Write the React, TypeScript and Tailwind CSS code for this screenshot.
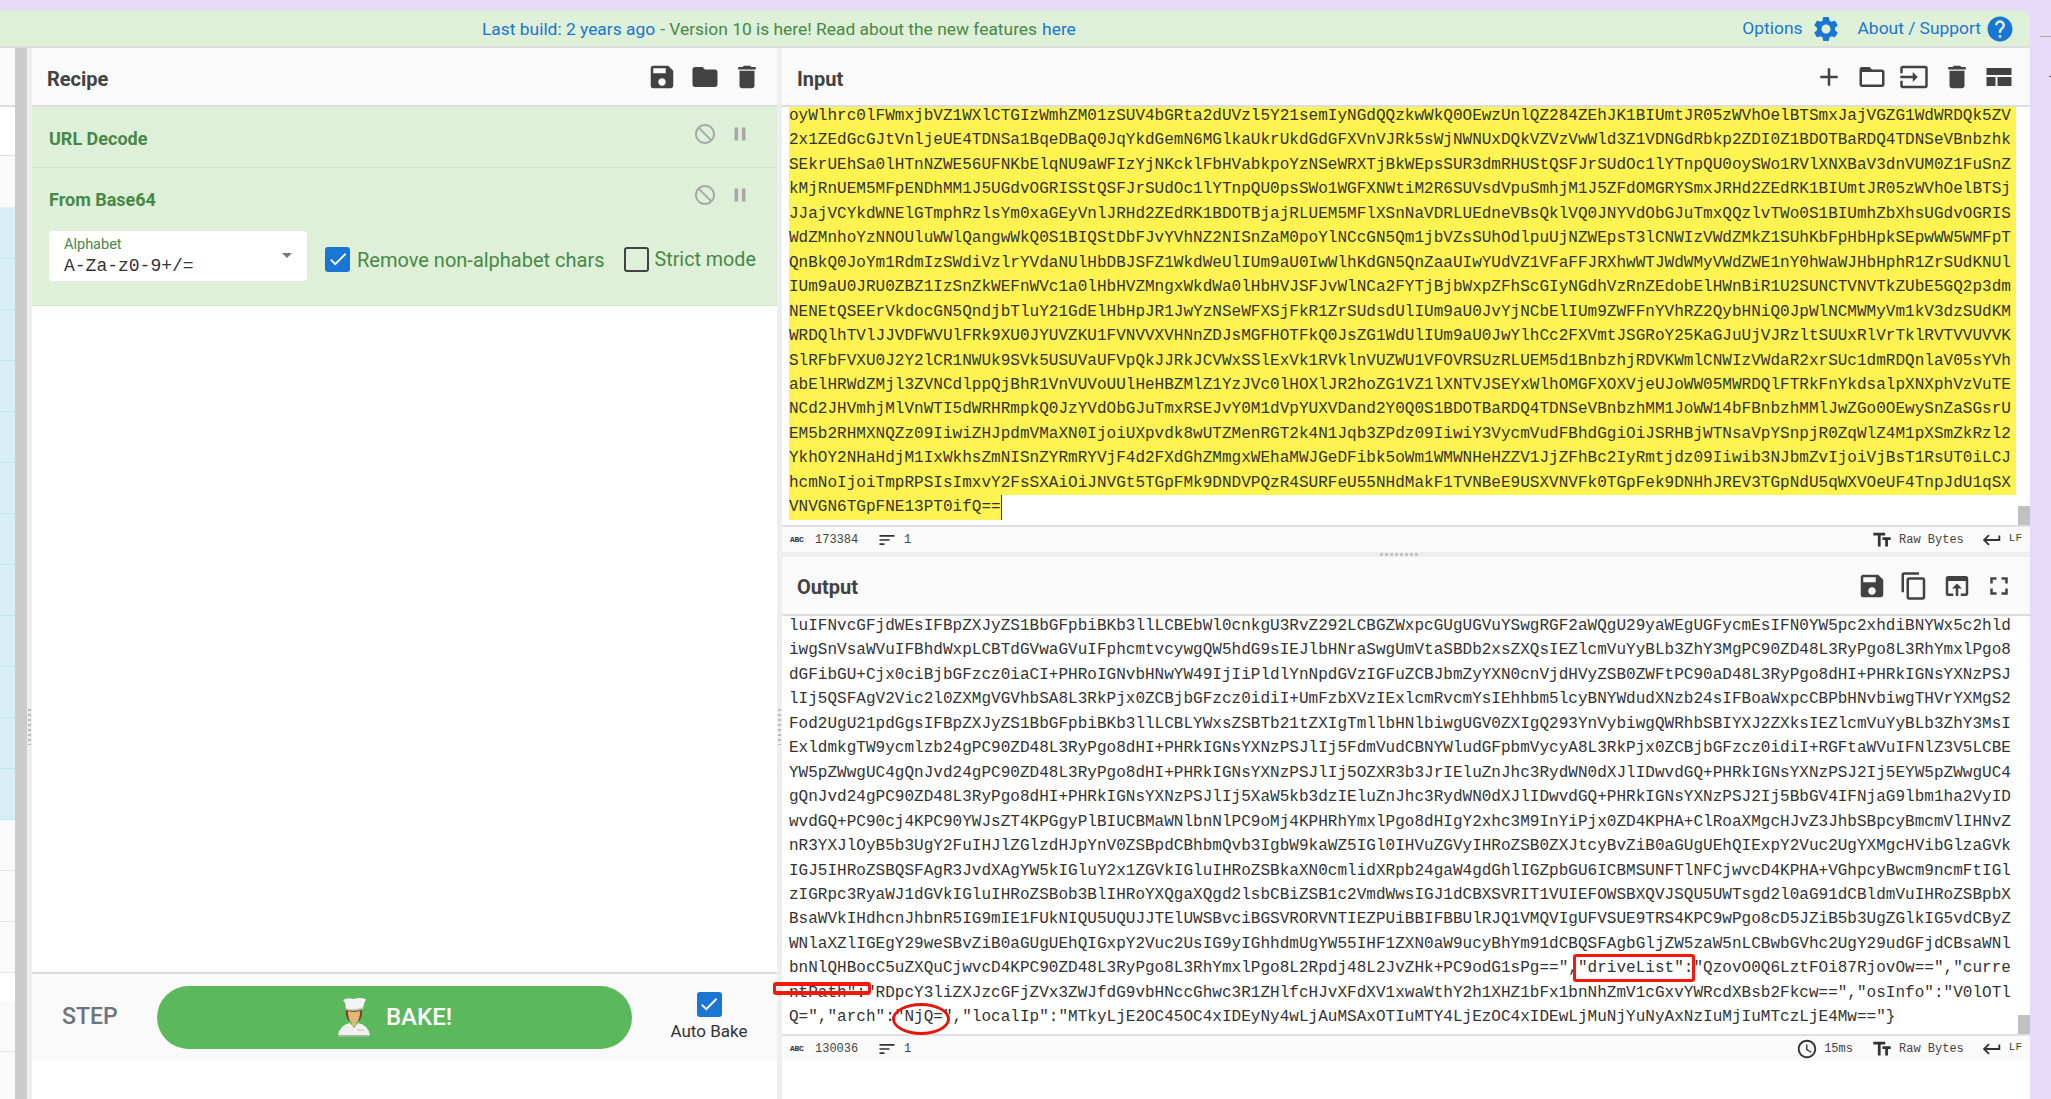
import React from "react";
import {
  MdSave, MdFolder, MdDelete, MdBlock, MdPause, MdSettings, MdHelp, MdAdd, MdFolderOpen, MdInput,
  MdContentCopy, MdOpenInBrowser, MdFullscreen, MdTextFields, MdKeyboardReturn, MdAccessTime, MdSort, MdCheck,
} from "react-icons/md";

const inputLines = [
  "oyWlhrc0lFWmxjbVZ1WXlCTGIzWmhZM01zSUV4bGRta2dUVzl5Y21semIyNGdQQzkwWkQ0OEwzUnlQZ284ZEhJK1BIUmtJR05zWVhOelBTSmxJajVGZG1WdWRDQk5ZV",
  "2x1ZEdGcGJtVnljeUE4TDNSa1BqeDBaQ0JqYkdGemN6MGlkaUkrUkdGdGFXVnVJRk5sWjNWNUxDQkVZVzVwWld3Z1VDNGdRbkp2ZDI0Z1BDOTBaRDQ4TDNSeVBnbzhk",
  "SEkrUEhSa0lHTnNZWE56UFNKbElqNU9aWFIzYjNKcklFbHVabkpoYzNSeWRXTjBkWEpsSUR3dmRHUStQSFJrSUdOc1lYTnpQU0oySWo1RVlXNXBaV3dnVUM0Z1FuSnZ",
  "kMjRnUEM5MFpENDhMM1J5UGdvOGRISStQSFJrSUdOc1lYTnpQU0psSWo1WGFXNWtiM2R6SUVsdVpuSmhjM1J5ZFdOMGRYSmxJRHd2ZEdRK1BIUmtJR05zWVhOelBTSj",
  "JJajVCYkdWNElGTmphRzlsYm0xaGEyVnlJRHd2ZEdRK1BDOTBjajRLUEM5MFlXSnNaVDRLUEdneVBsQklVQ0JNYVdObGJuTmxQQzlvTWo0S1BIUmhZbXhsUGdvOGRIS",
  "WdZMnhoYzNNOUluWWlQangwWkQ0S1BIQStDbFJvYVhNZ2NISnZaM0poYlNCcGN5Qm1jbVZsSUhOdlpuUjNZWEpsT3lCNWIzVWdZMkZ1SUhKbFpHbHpkSEpwWW5WMFpT",
  "QnBkQ0JoYm1RdmIzSWdiVzlrYVdaNUlHbDBJSFZ1WkdWeUlIUm9aU0IwWlhKdGN5QnZaaUIwYUdVZ1VFaFFJRXhwWTJWdWMyVWdZWE1nY0hWaWJHbHphR1ZrSUdKNUl",
  "IUm9aU0JRU0ZBZ1IzSnZkWEFnWVc1a0lHbHVZMngxWkdWa0lHbHVJSFJvWlNCa2FYTjBjbWxpZFhScGIyNGdhVzRnZEdobElHWnBiR1U2SUNCTVNVTkZUbE5GQ2p3dm",
  "NENEtQSEErVkdocGN5QndjbTluY21GdElHbHpJR1JwYzNSeWFXSjFkR1ZrSUdsdUlIUm9aU0JvYjNCbElIUm9ZWFFnYVhRZ2QybHNiQ0JpWlNCMWMyVm1kV3dzSUdKM",
  "WRDQlhTVlJJVDFWVUlFRk9XU0JYUVZKU1FVNVVXVHNnZDJsMGFHOTFkQ0JsZG1WdUlIUm9aU0JwYlhCc2FXVmtJSGRoY25KaGJuUjVJRzltSUUxRlVrTklRVTVVUVVK",
  "SlRFbFVXU0J2Y2lCR1NWUk9SVk5USUVaUFVpQkJJRkJCVWxSSlExVk1RVklnVUZWU1VFOVRSUzRLUEM5d1BnbzhjRDVKWmlCNWIzVWdaR2xrSUc1dmRDQnlaV05sYVh",
  "abElHRWdZMjl3ZVNCdlppQjBhR1VnVUVoUUlHeHBZMlZ1YzJVc0lHOXlJR2hoZG1VZ1lXNTVJSEYxWlhOMGFXOXVjeUJoWW05MWRDQlFTRkFnYkdsalpXNXphVzVuTE",
  "NCd2JHVmhjMlVnWTI5dWRHRmpkQ0JzYVdObGJuTmxRSEJvY0M1dVpYUXVDand2Y0Q0S1BDOTBaRDQ4TDNSeVBnbzhMM1JoWW14bFBnbzhMMlJwZGo0OEwySnZaSGsrU",
  "EM5b2RHMXNQZz09IiwiZHJpdmVMaXN0IjoiUXpvdk8wUTZMenRGT2k4N1Jqb3ZPdz09IiwiY3VycmVudFBhdGgiOiJSRHBjWTNsaVpYSnpjR0ZqWlZ4M1pXSmZkRzl2",
  "YkhOY2NHaHdjM1IxWkhsZmNISnZYRmRYVjF4d2FXdGhZMmgxWEhaMWJGeDFibk5oWm1WMWNHeHZZV1JjZFhBc2IyRmtjdz09Iiwib3NJbmZvIjoiVjBsT1RsUT0iLCJ",
  "hcmNoIjoiTmpRPSIsImxvY2FsSXAiOiJNVGt5TGpFMk9DNDVPQzR4SURFeU55NHdMakF1TVNBeE9USXVNVFk0TGpFek9DNHhJREV3TGpNdU5qWXVOeUF4TnpJdU1qSX",
];
const inputLast = "VNVGN6TGpFNE13PT0ifQ==";

const outputLines = [
  "luIFNvcGFjdWEsIFBpZXJyZS1BbGFpbiBKb3llLCBEbWl0cnkgU3RvZ292LCBGZWxpcGUgUGVuYSwgRGF2aWQgU29yaWEgUGFycmEsIFN0YW5pc2xhdiBNYWx5c2hld",
  "iwgSnVsaWVuIFBhdWxpLCBTdGVwaGVuIFphcmtvcywgQW5hdG9sIEJlbHNraSwgUmVtaSBDb2xsZXQsIEZlcmVuYyBLb3ZhY3MgPC90ZD48L3RyPgo8L3RhYmxlPgo8",
  "dGFibGU+Cjx0ciBjbGFzcz0iaCI+PHRoIGNvbHNwYW49IjIiPldlYnNpdGVzIGFuZCBJbmZyYXN0cnVjdHVyZSB0ZWFtPC90aD48L3RyPgo8dHI+PHRkIGNsYXNzPSJ",
  "lIj5QSFAgV2Vic2l0ZXMgVGVhbSA8L3RkPjx0ZCBjbGFzcz0idiI+UmFzbXVzIExlcmRvcmYsIEhhbm5lcyBNYWdudXNzb24sIFBoaWxpcCBPbHNvbiwgTHVrYXMgS2",
  "Fod2UgU21pdGgsIFBpZXJyZS1BbGFpbiBKb3llLCBLYWxsZSBTb21tZXIgTmllbHNlbiwgUGV0ZXIgQ293YnVybiwgQWRhbSBIYXJ2ZXksIEZlcmVuYyBLb3ZhY3MsI",
  "ExldmkgTW9ycmlzb24gPC90ZD48L3RyPgo8dHI+PHRkIGNsYXNzPSJlIj5FdmVudCBNYWludGFpbmVycyA8L3RkPjx0ZCBjbGFzcz0idiI+RGFtaWVuIFNlZ3V5LCBE",
  "YW5pZWwgUC4gQnJvd24gPC90ZD48L3RyPgo8dHI+PHRkIGNsYXNzPSJlIj5OZXR3b3JrIEluZnJhc3RydWN0dXJlIDwvdGQ+PHRkIGNsYXNzPSJ2Ij5EYW5pZWwgUC4",
  "gQnJvd24gPC90ZD48L3RyPgo8dHI+PHRkIGNsYXNzPSJlIj5XaW5kb3dzIEluZnJhc3RydWN0dXJlIDwvdGQ+PHRkIGNsYXNzPSJ2Ij5BbGV4IFNjaG9lbm1ha2VyID",
  "wvdGQ+PC90cj4KPC90YWJsZT4KPGgyPlBIUCBMaWNlbnNlPC9oMj4KPHRhYmxlPgo8dHIgY2xhc3M9InYiPjx0ZD4KPHA+ClRoaXMgcHJvZ3JhbSBpcyBmcmVlIHNvZ",
  "nR3YXJlOyB5b3UgY2FuIHJlZGlzdHJpYnV0ZSBpdCBhbmQvb3IgbW9kaWZ5IGl0IHVuZGVyIHRoZSB0ZXJtcyBvZiB0aGUgUEhQIExpY2Vuc2UgYXMgcHVibGlzaGVk",
  "IGJ5IHRoZSBQSFAgR3JvdXAgYW5kIGluY2x1ZGVkIGluIHRoZSBkaXN0cmlidXRpb24gaW4gdGhlIGZpbGU6ICBMSUNFTlNFCjwvcD4KPHA+VGhpcyBwcm9ncmFtIGl",
  "zIGRpc3RyaWJ1dGVkIGluIHRoZSBob3BlIHRoYXQgaXQgd2lsbCBiZSB1c2VmdWwsIGJ1dCBXSVRIT1VUIEFOWSBXQVJSQU5UWTsgd2l0aG91dCBldmVuIHRoZSBpbX",
  "BsaWVkIHdhcnJhbnR5IG9mIE1FUkNIQU5UQUJJTElUWSBvciBGSVRORVNTIEZPUiBBIFBBUlRJQ1VMQVIgUFVSUE9TRS4KPC9wPgo8cD5JZiB5b3UgZGlkIG5vdCByZ",
  "WNlaXZlIGEgY29weSBvZiB0aGUgUEhQIGxpY2Vuc2UsIG9yIGhhdmUgYW55IHF1ZXN0aW9ucyBhYm91dCBQSFAgbGljZW5zaW5nLCBwbGVhc2UgY29udGFjdCBsaWNl",
  'bnNlQHBocC5uZXQuCjwvcD4KPC90ZD48L3RyPgo8L3RhYmxlPgo8L2Rpdj48L2JvZHk+PC9odG1sPg==","driveList":"QzovO0Q6LztFOi87RjovOw==","curre',
  'ntPath":"RDpcY3liZXJzcGFjZVx3ZWJfdG9vbHNccGhwc3R1ZHlfcHJvXFdXV1xwaWthY2h1XHZ1bFx1bnNhZmV1cGxvYWRcdXBsb2Fkcw==","osInfo":"V0lOTl',
  'Q=","arch":"NjQ=","localIp":"MTkyLjE2OC45OC4xIDEyNy4wLjAuMSAxOTIuMTY4LjEzOC4xIDEwLjMuNjYuNyAxNzIuMjIuMTczLjE4Mw=="}',
];

const blueRows = Array.from({ length: 12 }, (_, i) => i);
const greyRows = [0, 1, 2];

function ChefIcon() {
  return (
    <svg width="34" height="40" viewBox="0 0 34 40" className="shrink-0">
      <path d="M6 3 Q11 0 16 2 Q23 0 29 2 L27 7 L26 11 Q16 14 9 12 L8 6 Z" fill="#f4f4f2" />
      <path d="M9 11 Q16 14 26 10 L26 12 Q16 15 9 13 Z" fill="#c9c9c4" />
      <path d="M9 13 Q17 15 25 13 Q26 20 22 24 L12 24 Q8 20 9 13 Z" fill="#7a4a22" />
      <path d="M11 14 Q17 16 23 14 Q23 23 19 26 L19 29 L15 29 L15 26 Q11 23 11 14 Z" fill="#e2b877" />
      <path d="M13 26 L17 31 L21 26 Q31 28 33 38 L1 38 Q3 28 13 26 Z" fill="#f1f1ee" />
      <path d="M1 38 L33 38 L32 40 L2 40 Z" fill="#9fb59f" />
      <path d="M20 33 L27 33" stroke="#bbb" strokeWidth="1" />
    </svg>
  );
}

function LayoutIcon() {
  return (
    <svg width="30" height="30" viewBox="0 0 30 30" fill="#424242">
      <rect x="2.5" y="6" width="25" height="7" />
      <rect x="2.5" y="15" width="9" height="9" />
      <rect x="13.5" y="15" width="14" height="9" />
    </svg>
  );
}

function StatusBar({ count, time }: { count: string; time?: boolean }) {
  return (
    <div className="h-[27px] shrink-0 flex items-center bg-[#fafafa] border-t-2 border-[#e0e0e0] pl-[8px] pr-[8px] text-[#444] font-['Liberation_Mono',monospace] text-[12px]">
      <span className="text-[8px] font-bold w-[17px] tracking-[-0.3px] text-[#333]">ABC</span>
      <span className="ml-[8px] w-[50px]">{count}</span>
      <MdSort size={20} className="ml-[12px] text-[#333]" />
      <span className="ml-[7px]">1</span>
      <span className="ml-auto flex items-center">
        {time && (
          <span className="flex items-center mr-[18px]">
            <MdAccessTime size={22} className="text-[#333]" />
            <span className="ml-[6px]">15ms</span>
          </span>
        )}
        <MdTextFields size={22} className="text-[#333]" />
        <span className="ml-[6px]">Raw Bytes</span>
        <MdKeyboardReturn size={22} className="ml-[17px] text-[#333]" />
        <span className="ml-[6px] -translate-y-[1px] text-[11px]">LF</span>
      </span>
    </div>
  );
}

function Grip({ vertical }: { vertical?: boolean }) {
  return vertical ? (
    <div className="absolute left-[1px] top-[661px] w-[3px] h-[36px] bg-[repeating-linear-gradient(to_bottom,#bbb_0,#bbb_2px,transparent_2px,transparent_5px)]" />
  ) : (
    <div className="absolute left-[598px] top-[1px] h-[3px] w-[40px] bg-[repeating-linear-gradient(to_right,#c4c4c4_0,#c4c4c4_3px,transparent_3px,transparent_5px)]" />
  );
}

function OpRow({ title, children, tall }: { title: string; children?: React.ReactNode; tall?: boolean }) {
  return (
    <div className={`${tall ? "h-[138px]" : "h-[61px]"} shrink-0 bg-[#dff0d8] border-b border-[#d0e6c4] px-[17px] pt-[16px]`}>
      <div className="flex items-center h-[30px]">
        <span className="text-[18px] font-bold text-[#468847]">{title}</span>
        <span className="ml-auto flex items-center text-[#a8a8a8] mr-[9px] gap-[12px] -translate-y-[4px]">
          <MdBlock size={24} className="-scale-x-100" />
          <MdPause size={22} />
        </span>
      </div>
      {children}
    </div>
  );
}

export default function App() {
  return (
    <div className="relative h-[1099px] w-[2051px] overflow-hidden bg-[#e8daf9] pt-[10px] pr-[21px] font-['Roboto',sans-serif]">
      <div className="absolute right-0 top-[36px] h-px w-[11px] bg-[#aaa]" />
      <div className="absolute right-0 top-[76px] h-px w-[2px] bg-[#555]" />

      <div className="relative h-full flex flex-col bg-white rounded-tr-[12px] overflow-hidden">
        {/* banner */}
        <div className="h-[38px] shrink-0 flex items-center bg-[#dff0d8] border-t border-b-2 border-t-[#d8e8d0] border-b-[#ddd] pl-[482px] pr-[15px] text-[17.4px]">
          <span className="pt-[1px] text-[#1976d2]">Last build: 2 years ago</span>
          <span className="pt-[1px] text-[#468847] ml-[5px]">- Version 10 is here! Read about the new features</span>
          <span className="pt-[1px] text-[#1976d2] ml-[5px]">here</span>
          <span className="ml-auto flex items-center text-[#1976d2]">
            <span>Options</span>
            <MdSettings size={30} className="ml-[8px]" />
            <span className="ml-[17px]">About / Support</span>
            <MdHelp size={30} className="ml-[4px]" />
          </span>
        </div>

        <div className="flex-1 flex min-h-0">
          {/* operations sliver */}
          <div className="w-[15px] shrink-0 flex flex-col">
            <div className="h-[59px] bg-[#fafafa] border-b-2 border-[#ddd]" />
            <div className="h-[49px] bg-white border-b border-[#ddd]" />
            <div className="h-[52px] bg-[#fafafa] border-b border-[#eee]" />
            {blueRows.map((i) => (
              <div key={i} className="h-[51px] shrink-0 bg-[#d9edf7] border-b border-[#bce8f1]" />
            ))}
            {greyRows.map((i) => (
              <div key={i} className="h-[51px] shrink-0 bg-[#fafafa] border-b border-[#e4e4e4]" />
            ))}
            <div className="h-[29px] bg-white" />
            <div className="h-[50px] bg-[#fafafa] border-b border-[#e4e4e4]" />
            <div className="flex-1 bg-[#fafafa]" />
          </div>
          <div className="w-[12px] shrink-0 bg-[#cccccc]" />
          <div className="relative w-[5px] shrink-0 bg-[#eeeeee]">
            <Grip vertical />
          </div>

          {/* recipe */}
          <div className="w-[745px] shrink-0 flex flex-col bg-white">
            <div className="h-[59px] shrink-0 flex items-center bg-[#fafafa] border-b-2 border-[#ddd] pl-[15px] pr-[15px]">
              <span className="pt-[5px] text-[20px] font-bold text-[#424242]">Recipe</span>
              <span className="ml-auto flex items-center gap-[12.5px] text-[#424242]">
                <MdSave size={30} />
                <MdFolder size={30} />
                <MdDelete size={30} />
              </span>
            </div>
            <OpRow title="URL Decode" />
            <OpRow title="From Base64" tall>
              <div className="flex items-center mt-[17px]">
                <div className="relative w-[258px] h-[50px] bg-white rounded-[4px] pl-[15px] pt-[5px] shrink-0">
                  <div className="text-[14.5px] leading-[18px] text-[#468847]">Alphabet</div>
                  <div className="font-['Liberation_Mono',monospace] text-[18px] leading-[24px] text-[#333]">A-Za-z0-9+/=</div>
                  <div className="absolute left-[233px] top-[22px] w-0 h-0 border-l-[5px] border-r-[5px] border-t-[5px] border-l-transparent border-r-transparent border-t-[#777]" />
                </div>
                <div className="ml-[18px] mt-[6px] w-[25px] h-[25px] bg-[#1976d2] rounded-[3px] flex items-center justify-center shrink-0">
                  <MdCheck size={22} className="text-white" />
                </div>
                <span className="ml-[7px] mt-[8px] text-[20px] text-[#468847] whitespace-nowrap">Remove non-alphabet chars</span>
                <div className="ml-[19px] mt-[6px] w-[25px] h-[25px] border-2 border-[#424242] rounded-[3px] shrink-0" />
                <span className="ml-[6px] mt-[8px] text-[19.7px] text-[#468847] whitespace-nowrap">Strict mode</span>
              </div>
            </OpRow>
            <div className="flex-1" />
            <div className="h-[88px] shrink-0 flex items-center bg-[#fafafa] border-t-2 border-[#ddd] pl-[30px]">
              <span className="w-[95px] pt-[1px] text-[23px] font-medium text-[#6c757d]">STEP</span>
              <button className="w-[475px] h-[63px] rounded-full bg-[#5cb85c] flex items-center justify-center gap-[15px] text-white text-[24px] font-medium">
                <ChefIcon />
                <span>BAKE!</span>
              </button>
              <div className="ml-[38px] w-[78px] flex flex-col items-center">
                <div className="w-[25px] h-[25px] bg-[#1976d2] rounded-[3px] flex items-center justify-center">
                  <MdCheck size={22} className="text-white" />
                </div>
                <span className="mt-[2px] text-[17px] leading-[24px] text-[#333] whitespace-nowrap">Auto Bake</span>
              </div>
            </div>
            <div className="h-[39px] shrink-0 bg-white" />
          </div>

          <div className="relative w-[5px] shrink-0 bg-[#eeeeee]">
            <Grip vertical />
          </div>

          {/* input / output */}
          <div className="flex-1 min-w-0 flex flex-col bg-white">
            <div className="h-[59px] shrink-0 flex items-center bg-[#fafafa] border-b-2 border-[#ddd] pl-[15px] pr-[16px]">
              <span className="pt-[5px] text-[20px] font-bold text-[#424242]">Input</span>
              <span className="ml-auto flex items-center gap-[12.5px] text-[#424242]">
                <MdAdd size={30} />
                <MdFolderOpen size={30} />
                <MdInput size={30} />
                <MdDelete size={30} />
                <LayoutIcon />
              </span>
            </div>

            <div className="relative h-[418px] shrink-0 overflow-hidden bg-white pl-[7px] pr-[14px] font-['Liberation_Mono',monospace] text-[16px] leading-[24.45px] tracking-[0.02px] text-[#333]">
              <div className="-mt-[3px]">
                {inputLines.map((l) => (
                  <div key={l} className="bg-[#fff352] whitespace-pre">{l}</div>
                ))}
                <div className="whitespace-pre">
                  <span className="inline-block bg-[#fff352] border-r border-[#333]">{inputLast}</span>
                </div>
              </div>
              <div className="absolute right-0 bottom-0 w-[12px] h-[19px] bg-[#c1c1c1]" />
            </div>
            <StatusBar count="173384" />

            <div className="relative h-[5px] shrink-0 bg-[#eeeeee]">
              <Grip />
            </div>

            <div className="h-[59px] shrink-0 flex items-center bg-[#fafafa] border-b-2 border-[#ddd] pl-[15px] pr-[16px]">
              <span className="pt-[2px] text-[20px] font-bold text-[#424242]">Output</span>
              <span className="ml-auto flex items-center gap-[12.5px] text-[#424242]">
                <MdSave size={30} />
                <MdContentCopy size={30} />
                <MdOpenInBrowser size={30} />
                <MdFullscreen size={30} />
              </span>
            </div>

            <div className="relative h-[418px] shrink-0 overflow-hidden bg-white pl-[7px] font-['Liberation_Mono',monospace] text-[16px] leading-[24.45px] tracking-[0.02px] text-[#333]">
              <div className="-mt-[2px]">
                {outputLines.map((l) => (
                  <div key={l} className="whitespace-pre">{l}</div>
                ))}
              </div>
              <div className="absolute right-0 bottom-0 w-[12px] h-[19px] bg-[#c1c1c1]" />
            </div>
            <StatusBar count="130036" time />
            <div className="flex-1 bg-white" />
          </div>
        </div>
      </div>

      {/* hand-drawn annotations over the screenshot */}
      <div className="absolute left-[1573px] top-[954px] w-[122px] h-[28px] border-[3px] border-[#f5180c] rounded-[3px]" />
      <div className="absolute left-[773px] top-[982px] w-[98px] h-[13px] border-y-[4px] border-x-[3px] border-[#f5180c] rounded-[3px]" />
      <div className="absolute left-[892px] top-[1003px] w-[58px] h-[32px] border-[3px] border-[#e8140c] rounded-[50%]" />
    </div>
  );
}
